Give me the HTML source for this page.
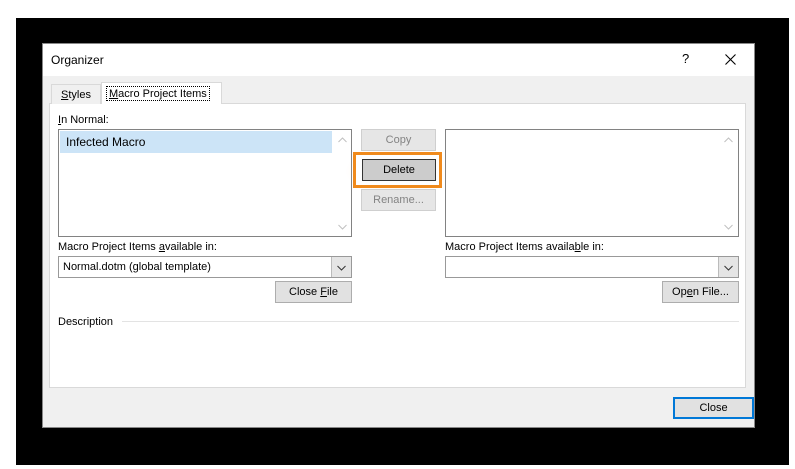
<!DOCTYPE html><html><head><style>
body{margin:0;width:795px;height:469px;background:#fff;position:relative;overflow:hidden;font-family:"Liberation Sans",sans-serif;font-size:11px;color:#000}
.a{position:absolute;box-sizing:border-box}
.btn{background:#e1e1e1;border:1px solid #adadad;text-align:center;line-height:21px}
.dis{color:#838383;background:#e6e6e6;border-color:#cfcfcf}
u{text-decoration:underline}
.list{background:#fff;border:1px solid #828282}
</style></head><body>
<div class="a" style="left:16px;top:18px;width:773px;height:447px;background:#000"></div>
<div class="a" style="left:42px;top:43px;width:713px;height:385px;background:#f0f0f0;border:1px solid #888"></div>
<div class="a" style="left:43px;top:44px;width:711px;height:32px;background:#fff"></div>
<div class="a" style="left:51px;top:53px;font-size:12px">Organizer</div>
<div class="a" style="left:682px;top:51px;font-size:13px">?</div>
<svg class="a" style="left:725px;top:54px" width="11" height="11"><path d="M0.5 0.5L10.5 10.5M10.5 0.5L0.5 10.5" stroke="#000" stroke-width="1.1"/></svg>
<div class="a" style="left:49px;top:103px;width:697px;height:285px;background:#fff;border:1px solid #d9d9d9"></div>
<div class="a" style="left:51px;top:84px;width:50px;height:20px;border:1px solid #d9d9d9;border-bottom:none;background:#f0f0f0"></div>
<div class="a" style="left:61px;top:89px"><u>S</u>tyles</div>
<div class="a" style="left:101px;top:82px;width:121px;height:22px;border:1px solid #d9d9d9;border-bottom:none;background:#fff"></div>
<div class="a" style="left:106px;top:86px;border:1px dotted #000;padding:0 2px;height:15px;line-height:14px"><u>M</u>acro Project Items</div>
<div class="a" style="left:58px;top:114px"><u>I</u>n Normal:</div>
<div class="a list" style="left:58px;top:129px;width:294px;height:108px"></div>
<div class="a" style="left:60px;top:131px;width:272px;height:22px;background:#cce4f7;padding-left:6px;line-height:23px;font-size:12px">Infected Macro</div>
<svg class="a" style="left:338px;top:137px" width="9" height="6"><path d="M0.5 5L4.5 1L8.5 5" stroke="#c0c0c0" fill="none"/></svg>
<svg class="a" style="left:338px;top:224px" width="9" height="6"><path d="M0.5 1L4.5 5L8.5 1" stroke="#c0c0c0" fill="none"/></svg>
<div class="a list" style="left:445px;top:129px;width:294px;height:108px"></div>
<svg class="a" style="left:724px;top:137px" width="9" height="6"><path d="M0.5 5L4.5 1L8.5 5" stroke="#c0c0c0" fill="none"/></svg>
<svg class="a" style="left:724px;top:224px" width="9" height="6"><path d="M0.5 1L4.5 5L8.5 1" stroke="#c0c0c0" fill="none"/></svg>
<div class="a" style="left:345px;top:146px;width:104px;height:50px;background:radial-gradient(ellipse,rgba(255,200,150,.35),rgba(255,255,255,0) 70%)"></div>
<div class="a btn dis" style="left:361px;top:129px;width:75px;height:22px">Copy</div>
<div class="a" style="left:353px;top:152px;width:89px;height:36px;border:3px solid #f08a1c;background:#fff"></div>
<div class="a btn" style="left:362px;top:159px;width:74px;height:22px;background:#ccc;border-color:#333">Delete</div>
<div class="a btn dis" style="left:361px;top:189px;width:75px;height:22px">Rename...</div>
<div class="a" style="left:58px;top:241px">Macro Project Items <u>a</u>vailable in:</div>
<div class="a" style="left:445px;top:241px">Macro Project Items availa<u>b</u>le in:</div>
<div class="a list" style="left:58px;top:256px;width:294px;height:22px;border-color:#999;padding-left:4px;line-height:20px">Normal.dotm (global template)</div>
<div class="a" style="left:331px;top:257px;width:20px;height:20px;background:#e5e5e5;border-left:1px solid #bbb"></div>
<svg class="a" style="left:337px;top:265px" width="9" height="6"><path d="M0.5 1L4.5 5L8.5 1" stroke="#333" fill="none"/></svg>
<div class="a list" style="left:445px;top:256px;width:294px;height:22px;border-color:#999"></div>
<div class="a" style="left:718px;top:257px;width:20px;height:20px;background:#e5e5e5;border-left:1px solid #bbb"></div>
<svg class="a" style="left:724px;top:265px" width="9" height="6"><path d="M0.5 1L4.5 5L8.5 1" stroke="#333" fill="none"/></svg>
<div class="a btn" style="left:275px;top:281px;width:77px;height:22px">Close <u>F</u>ile</div>
<div class="a btn" style="left:662px;top:281px;width:77px;height:22px">Op<u>e</u>n File...</div>
<div class="a" style="left:58px;top:316px">Description</div>
<div class="a" style="left:122px;top:321px;width:617px;height:1px;background:#e3e3e3"></div>
<div class="a btn" style="left:673px;top:397px;width:81px;height:22px;border:2px solid #0078d7;line-height:19px">Close</div>
</body></html>
